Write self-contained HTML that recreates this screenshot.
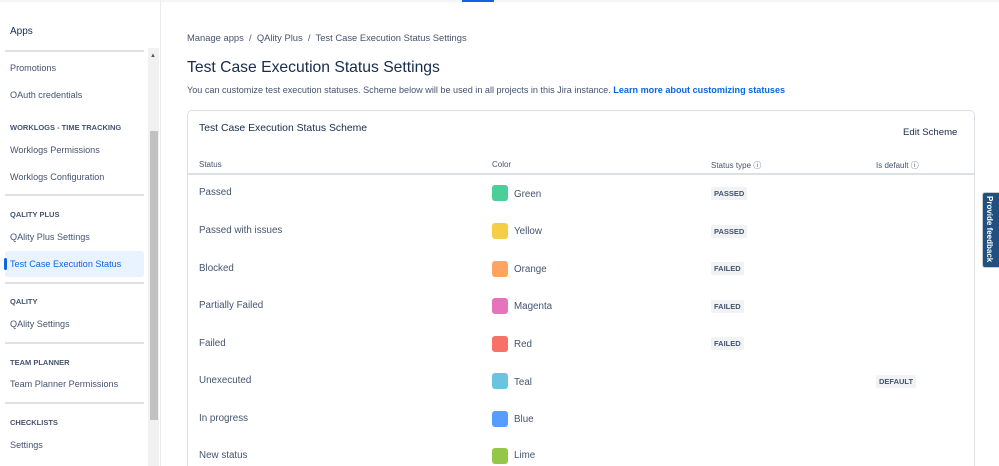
<!DOCTYPE html>
<html style="width:999px;height:466px;overflow:hidden"><head><style>
*{margin:0;padding:0;box-sizing:border-box}
body{width:999px;height:466px;overflow:hidden;background:#fff;font-family:"Liberation Sans",sans-serif;color:#44546f;position:relative}
.a{position:absolute;white-space:nowrap}
.side{font-size:9.1px;color:#44546f}
.hd{font-size:7.5px;font-weight:bold;color:#44546f}
.div{position:absolute;left:5px;width:139px;height:2px;background:#dfe1e6}
.sw{position:absolute;left:492px;width:16px;height:16px;border-radius:3px}
.lz{position:absolute;font-size:7.5px;font-weight:bold;background:#f1f2f4;color:#44546f;padding:2px 3px;border-radius:2px}
.r{font-size:9.8px}
</style></head><body>
<div class="a" style="left:0;top:0;width:999px;height:2px;background:#f4f5f7"></div>
<div class="a" style="left:462px;top:0;width:32px;height:2px;background:#0c66e4"></div>
<div class="a" style="left:160px;top:0;width:1px;height:466px;background:#ebecf0"></div>
<div class="a side" style="left:10px;top:26px;color:#172b4d;font-size:10px">Apps</div>
<div class="div" style="top:50px"></div>
<div class="a" style="left:148px;top:48px;width:11px;height:418px;background:#f1f1f1"></div>
<div class="a" style="left:150px;top:131px;width:8px;height:289px;background:#c1c1c1"></div>
<div class="a" style="left:150px;top:53px;font-size:6px;color:#555">▲</div>
<div class="a side" style="left:10px;top:63px">Promotions</div>
<div class="a side" style="left:10px;top:90px">OAuth credentials</div>
<div class="a hd" style="left:10px;top:123px">WORKLOGS - TIME TRACKING</div>
<div class="a side" style="left:10px;top:145px">Worklogs Permissions</div>
<div class="a side" style="left:10px;top:172px">Worklogs Configuration</div>
<div class="div" style="top:194px"></div>
<div class="a hd" style="left:10px;top:210px">QALITY PLUS</div>
<div class="a side" style="left:10px;top:232px">QAlity Plus Settings</div>
<div class="a" style="left:5px;top:251px;width:139px;height:26px;background:#e9f2ff;border-radius:3px"></div>
<div class="a" style="left:4px;top:258px;width:3px;height:12px;background:#0c66e4;border-radius:2px"></div>
<div class="a side" style="left:10px;top:259px;color:#0c66e4">Test Case Execution Status</div>
<div class="div" style="top:282px"></div>
<div class="a hd" style="left:10px;top:297px">QALITY</div>
<div class="a side" style="left:10px;top:319px">QAlity Settings</div>
<div class="div" style="top:342px"></div>
<div class="a hd" style="left:10px;top:358px">TEAM PLANNER</div>
<div class="a side" style="left:10px;top:379px">Team Planner Permissions</div>
<div class="div" style="top:402px"></div>
<div class="a hd" style="left:10px;top:418px">CHECKLISTS</div>
<div class="a side" style="left:10px;top:440px">Settings</div>

<div class="a" style="left:187px;top:32px;font-size:9.4px">Manage apps &nbsp;/&nbsp; QAlity Plus &nbsp;/&nbsp; Test Case Execution Status Settings</div>
<div class="a" style="left:187px;top:59px;font-size:15.7px;color:#172b4d">Test Case Execution Status Settings</div>
<div class="a" style="left:187px;top:85px;font-size:9.1px;color:#44546f">You can customize test execution statuses. Scheme below will be used in all projects in this Jira instance. <span style="color:#0c66e4;font-weight:bold">Learn more about customizing statuses</span></div>

<div class="a" style="left:187px;top:110px;width:788px;height:356px;border:1px solid #dcdfe4;border-bottom:none;border-radius:5px 5px 0 0"></div>
<div class="a" style="left:199px;top:123px;font-size:10.4px;color:#172b4d">Test Case Execution Status Scheme</div>
<div class="a" style="left:903px;top:127px;font-size:9.6px;color:#172b4d">Edit Scheme</div>
<div class="a" style="left:199px;top:160px;font-size:8px">Status</div>
<div class="a" style="left:492px;top:160px;font-size:8px">Color</div>
<div class="a" style="left:711px;top:160px;font-size:8px">Status type ⓘ</div>
<div class="a" style="left:876px;top:160px;font-size:8px">Is default ⓘ</div>
<div class="a" style="left:188px;top:173px;width:786px;height:2px;background:#dcdfe4"></div>

<div class="a r" style="left:199px;top:187px">Passed</div>
<div class="sw" style="top:185px;background:#4bce97"></div><div class="a r" style="left:514px;top:189px">Green</div>
<div class="lz" style="left:711px;top:187px">PASSED</div>

<div class="a r" style="left:199px;top:225px">Passed with issues</div>
<div class="sw" style="top:223px;background:#f5cd47"></div><div class="a r" style="left:514px;top:226px">Yellow</div>
<div class="lz" style="left:711px;top:225px">PASSED</div>

<div class="a r" style="left:199px;top:263px">Blocked</div>
<div class="sw" style="top:261px;background:#fea362"></div><div class="a r" style="left:514px;top:264px">Orange</div>
<div class="lz" style="left:711px;top:262px">FAILED</div>

<div class="a r" style="left:199px;top:300px">Partially Failed</div>
<div class="sw" style="top:298px;background:#e774bb"></div><div class="a r" style="left:514px;top:301px">Magenta</div>
<div class="lz" style="left:711px;top:300px">FAILED</div>

<div class="a r" style="left:199px;top:338px">Failed</div>
<div class="sw" style="top:336px;background:#f87168"></div><div class="a r" style="left:514px;top:339px">Red</div>
<div class="lz" style="left:711px;top:337px">FAILED</div>

<div class="a r" style="left:199px;top:375px">Unexecuted</div>
<div class="sw" style="top:373px;background:#6cc3e0"></div><div class="a r" style="left:514px;top:377px">Teal</div>
<div class="lz" style="left:876px;top:375px">DEFAULT</div>

<div class="a r" style="left:199px;top:413px">In progress</div>
<div class="sw" style="top:411px;background:#579dff"></div><div class="a r" style="left:514px;top:414px">Blue</div>

<div class="a r" style="left:199px;top:450px">New status</div>
<div class="sw" style="top:448px;background:#94c748"></div><div class="a r" style="left:514px;top:450px">Lime</div>

<div class="a" style="left:982px;top:192px;width:18px;height:76px;background:#205081;border:1px solid #ccc;border-radius:3px 0 0 3px"></div>
<div class="a" style="left:985px;top:196px;color:#fff;font-size:8px;font-weight:bold;writing-mode:vertical-rl">Provide feedback</div>
</body></html>
